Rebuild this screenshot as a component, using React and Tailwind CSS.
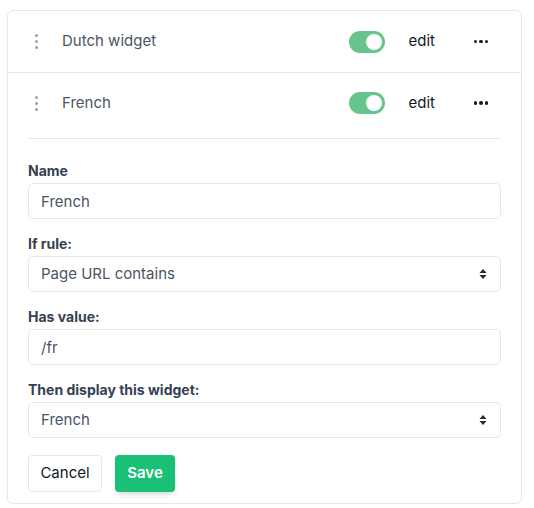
import React, { useState } from "react";

function Toggle({ on }) {
  return (
    <div
      className={`flex h-[22px] w-[36px] items-center rounded-full px-[3px] ${
        on ? "justify-end bg-[#67c48d]" : "justify-start bg-gray-300"
      }`}
    >
      <div className="h-[16px] w-[16px] rounded-full bg-white" />
    </div>
  );
}

function DragHandle() {
  return (
    <div className="flex w-4 flex-col items-center gap-[3px]">
      <span className="h-[3px] w-[3px] rounded-full bg-gray-400" />
      <span className="h-[3px] w-[3px] rounded-full bg-gray-400" />
      <span className="h-[3px] w-[3px] rounded-full bg-gray-400" />
    </div>
  );
}

function Dots() {
  return (
    <div className="flex w-7 items-center justify-center gap-[2px]">
      <span className="h-[3.5px] w-[3.5px] rounded-full bg-gray-900" />
      <span className="h-[3.5px] w-[3.5px] rounded-full bg-gray-900" />
      <span className="h-[3.5px] w-[3.5px] rounded-full bg-gray-900" />
    </div>
  );
}

function WidgetRow({ title, className }) {
  return (
    <div className={`flex items-center pl-[20px] pr-[26px] ${className}`}>
      <DragHandle />
      <span className="ml-[18px] flex-1 text-[15px] text-gray-600">{title}</span>
      <Toggle on />
      <span className="ml-[24px] text-[15px] text-gray-900">edit</span>
      <div className="ml-[32px]">
        <Dots />
      </div>
    </div>
  );
}

function SelectArrows() {
  return (
    <svg width="8" height="12" viewBox="0 0 8 12" className="text-gray-800">
      <path d="M4 1 L7.5 5 H0.5 Z" fill="currentColor" />
      <path d="M4 11 L7.5 7 H0.5 Z" fill="currentColor" />
    </svg>
  );
}

function Field({ label, children }) {
  return (
    <div className="flex flex-col">
      <label className="mb-[2px] text-[14px] leading-5 font-bold text-gray-700">{label}</label>
      {children}
    </div>
  );
}

function TextBox({ value, onChange }) {
  return (
    <input
      value={value}
      onChange={(e) => onChange(e.target.value)}
      className="h-[36px] w-full rounded-[5px] border border-gray-200 px-3 text-[15px] text-gray-600 outline-none"
    />
  );
}

function SelectBox({ value }) {
  return (
    <div className="flex h-[36px] w-full items-center justify-between rounded-[5px] border border-gray-200 pl-3 pr-[13px] text-[15px] text-gray-600">
      <span>{value}</span>
      <SelectArrows />
    </div>
  );
}

export default function App() {
  const [name, setName] = useState("French");
  const [value, setValue] = useState("/fr");

  return (
    <div className="min-h-screen bg-white pl-[7px] pt-[10px]" style={{ fontFamily: "Inter, 'Noto Sans', sans-serif" }}>
      <div className="w-[515px] rounded-md border border-gray-200 bg-white">
        <WidgetRow title="Dutch widget" className="h-[62px] border-b border-gray-200" />
        <WidgetRow title="French" className="h-[60px]" />
        <div className="mx-[20px] mt-[5px] border-t border-gray-200" />

        <div className="flex flex-col gap-[15px] px-[20px] pt-[22px] pb-[11px]">
          <Field label="Name">
            <TextBox value={name} onChange={setName} />
          </Field>
          <Field label="If rule:">
            <SelectBox value="Page URL contains" />
          </Field>
          <Field label="Has value:">
            <TextBox value={value} onChange={setValue} />
          </Field>
          <Field label="Then display this widget:">
            <SelectBox value="French" />
          </Field>
          <div className="mt-[2px] flex gap-[13px]">
            <button className="h-[37px] w-[74px] rounded-[4px] border border-gray-200 text-[15px] text-gray-900">
              Cancel
            </button>
            <button className="h-[37px] w-[60px] rounded-[4px] bg-[#19c075] text-[15px] font-semibold text-white shadow-md">
              Save
            </button>
          </div>
        </div>
      </div>
    </div>
  );
}
